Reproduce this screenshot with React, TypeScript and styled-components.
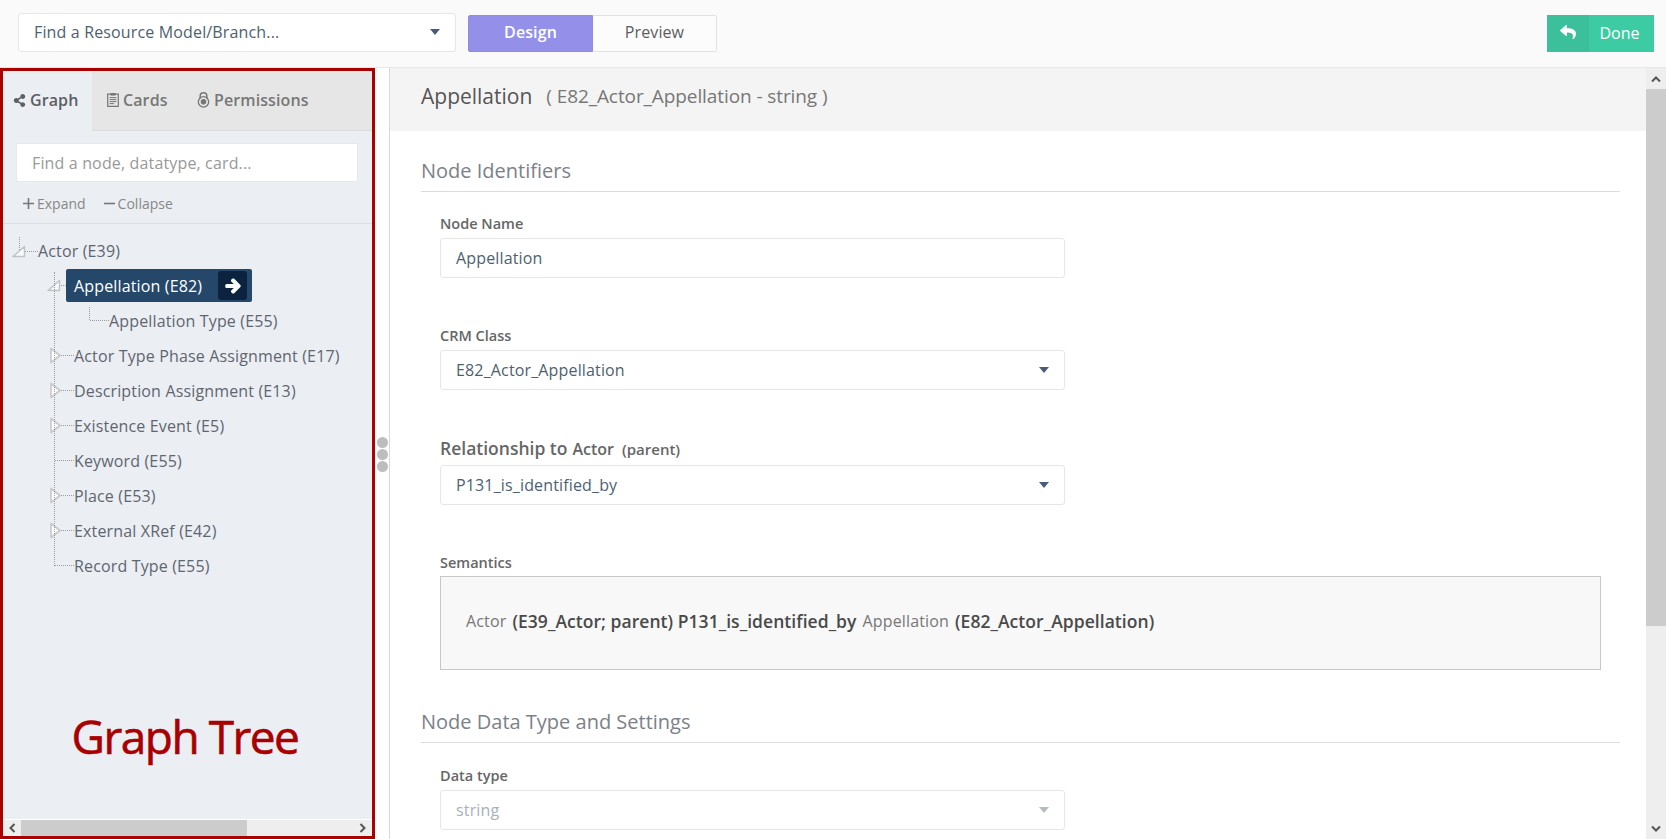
import React from "react";
import styled, { createGlobalStyle } from "styled-components";
import { FaShareAlt, FaReply, FaArrowRight } from "react-icons/fa";

const Global = createGlobalStyle`
  html, body { margin: 0; padding: 0; overflow: hidden; background: #fff; }
  * { box-sizing: border-box; }
  body { font-family: "Open Sans", "Liberation Sans", sans-serif; color: #666; }
`;

const Page = styled.div`
  width: 1666px;
  height: 839px;
  display: flex;
  flex-direction: column;
  overflow: hidden;
`;

const TopBar = styled.header`
  height: 68px;
  flex: none;
  display: flex;
  align-items: flex-start;
  padding: 13px 12px 0 18px;
  background: #fafafa;
  border-bottom: 1px solid #e8e8e8;
`;

const Select = styled.div<{ $width?: number; $disabled?: boolean }>`
  width: ${(p) => p.$width ?? 625}px;
  height: 40px;
  flex: none;
  display: flex;
  align-items: center;
  justify-content: space-between;
  padding: 0 15px 1px 15px;
  background: #fff;
  border: 1px solid #e6e6e6;
  border-radius: 3px;
  font-size: 16px;
  letter-spacing: 0.15px;
  color: ${(p) => (p.$disabled ? "#a9b1ba" : "#4d5f73")};
  svg { color: ${(p) => (p.$disabled ? "#b5bcc4" : "#4a5a78")}; }
`;

const TopSelect = styled(Select)`
  height: 39px;
  margin-right: 12px;
`;

const Segment = styled.button<{ $active?: boolean }>`
  width: ${(p) => (p.$active ? 125 : 124)}px;
  height: 37px;
  margin-top: 2px;
  padding: 0 0 3px;
  font-family: inherit;
  font-size: 16px;
  letter-spacing: 0.1px;
  font-weight: ${(p) => (p.$active ? 600 : 400)};
  color: ${(p) => (p.$active ? "#fff" : "#5c5c5c")};
  background: ${(p) => (p.$active ? "#9490ea" : "#fcfcfc")};
  border: 1px solid ${(p) => (p.$active ? "#8f8be6" : "#e2e2e2")};
  border-left-width: ${(p) => (p.$active ? 1 : 0)}px;
  border-radius: ${(p) => (p.$active ? "2px 0 0 2px" : "0 2px 2px 0")};
`;

const DoneButton = styled.div`
  margin-left: auto;
  margin-top: 2px;
  width: 107px;
  height: 37px;
  display: flex;
  background: #3dcba3;
  color: #fff;
  font-size: 16px;
`;

const DoneIcon = styled.span`
  width: 42px;
  display: flex;
  align-items: center;
  justify-content: center;
  padding-bottom: 4px;
  background: #3cc09c;
  font-size: 16px;
`;

const DoneLabel = styled.span`
  flex: 1;
  display: flex;
  align-items: center;
  justify-content: center;
  padding: 0 4px 2px 0;
`;

const Body = styled.div`
  flex: 1;
  min-height: 0;
  display: flex;
`;

const Side = styled.aside`
  width: 375px;
  flex: none;
  position: relative;
  display: flex;
  flex-direction: column;
  background: #ebeef3;
  border: 3px solid #a90000;
`;

const Tabs = styled.div`
  height: 60px;
  flex: none;
  display: flex;
  background: #e6e6e6;
  border-bottom: 1px solid #dcdcdc;
`;

const Tab = styled.div<{ $active?: boolean; $width: number; $pad: number }>`
  width: ${(p) => p.$width}px;
  display: flex;
  align-items: center;
  gap: 4px;
  padding: 0 0 2px ${(p) => p.$pad}px;
  font-size: 16px;
  font-weight: 600;
  letter-spacing: 0.1px;
  color: ${(p) => (p.$active ? "#5c5f63" : "#777")};
  background: ${(p) => (p.$active ? "#ebeef3" : "transparent")};
  border-right: ${(p) => (p.$active ? "1px solid #f0f0f0" : "none")};
  margin-bottom: ${(p) => (p.$active ? "-1px" : "0")};
  svg { flex: none; }
`;

const Search = styled.div`
  margin: 12px 14px 0 13px;
  height: 39px;
  padding: 0 0 0 15px;
  display: flex;
  align-items: center;
  background: #fff;
  border: 1px solid #e8e8e8;
  font-size: 16px;
  letter-spacing: 0.15px;
  color: #999;
`;

const TreeActions = styled.div`
  height: 42px;
  flex: none;
  display: flex;
  align-items: center;
  gap: 18px;
  padding: 2px 0 0 20px;
  border-bottom: 1px solid #dcdfe2;
  font-size: 14px;
  color: #888;
`;

const TreeAction = styled.span`
  display: flex;
  align-items: center;
  gap: 3px;
  svg { color: #777; }
`;

const Tree = styled.div`
  flex: 1;
  min-height: 0;
  position: relative;
  padding: 10px 0 0 11px;
  font-size: 16px;
  letter-spacing: 0.15px;
  color: #5f6670;
`;

const Row = styled.div<{ $indent: number }>`
  height: 35px;
  display: flex;
  align-items: center;
  padding-left: ${(p) => p.$indent}px;
  white-space: nowrap;
`;

const RootRow = styled(Row)`
  height: 34px;
`;

const Connector = styled.svg`
  flex: none;
  overflow: visible;
`;

const Selected = styled.div`
  width: 186px;
  height: 33px;
  flex: none;
  display: flex;
  align-items: center;
  justify-content: space-between;
  padding: 0 5px 0 8px;
  background: #25476a;
  border-radius: 2px;
  color: #fff;
`;

const GoBox = styled.span`
  width: 29px;
  height: 29px;
  display: flex;
  align-items: center;
  justify-content: center;
  background: #0c2340;
  border-radius: 3px;
  color: #fff;
  font-size: 16px;
  svg { stroke: currentColor; stroke-width: 50px; }
`;

const Annotation = styled.div`
  position: absolute;
  left: 0;
  right: 5px;
  top: 635px;
  text-align: center;
  font-size: 46px;
  line-height: 60px;
  font-weight: 500;
  letter-spacing: -1.5px;
  -webkit-text-stroke: 0.6px #a90000;
  color: #a90000;
`;

const HScroll = styled.div`
  height: 17px;
  flex: none;
  display: flex;
  align-items: center;
  background: #eee;
  border-top: 1px solid #fff;
`;

const ScrollArrow = styled.span`
  width: 18px;
  height: 17px;
  flex: none;
  display: flex;
  align-items: center;
  justify-content: center;
`;

const HThumb = styled.span`
  width: 226px;
  height: 100%;
  background: #ccc;
`;

const Spacer = styled.span`
  flex: 1;
`;

const Gutter = styled.div`
  width: 15px;
  flex: none;
  display: flex;
  flex-direction: column;
  align-items: center;
  justify-content: flex-start;
  padding-top: 369px;
  background: #fff;
  border-right: 1px solid #d8d8d8;
`;

const Dot = styled.span`
  width: 11px;
  height: 11px;
  flex: none;
  margin-bottom: 1px;
  border-radius: 50%;
  background: #bdbdbd;
`;

const Main = styled.main`
  flex: 1;
  min-width: 0;
  display: flex;
  flex-direction: column;
  overflow: hidden;
`;

const MainHeader = styled.div`
  height: 63px;
  flex: none;
  display: flex;
  align-items: center;
  padding: 0 0 7px 31px;
  background: #f4f4f4;
`;

const Title = styled.h1`
  margin: 0;
  font-size: 21px;
  font-weight: 400;
  color: #555;
`;

const Subtitle = styled.span`
  margin-left: 14px;
  font-size: 19px;
  letter-spacing: -0.09px;
  color: #777;
`;

const Content = styled.div`
  flex: 1;
  min-height: 0;
  overflow: hidden;
  padding: 25px 26px 0 31px;
`;

const SectionTitle = styled.h2<{ $top?: number }>`
  margin: ${(p) => p.$top ?? 0}px 0 0;
  height: 36px;
  padding-bottom: 7px;
  display: flex;
  align-items: flex-end;
  font-size: 20px;
  font-weight: 400;
  line-height: 26px;
  color: #7c8189;
  border-bottom: 1px solid #ddd;
`;

const Field = styled.div<{ $top: number }>`
  margin: ${(p) => p.$top}px 0 0 19px;
  display: flex;
  flex-direction: column;
`;

const FieldLabel = styled.label<{ $gap?: number }>`
  font-size: 14.5px;
  line-height: 20px;
  font-weight: 600;
  color: #666;
  margin-bottom: ${(p) => p.$gap ?? 4}px;
`;

const BigLabel = styled.label`
  display: flex;
  align-items: baseline;
  gap: 5px;
  height: 22px;
  font-size: 17.5px;
  line-height: 22px;
  font-weight: 600;
  color: #666;
  margin-bottom: 6px;
`;

const LabelNode = styled.span`
  font-size: 16px;
`;

const LabelNote = styled.span`
  font-size: 15px;
  margin-left: 3px;
`;

const Semantics = styled.div`
  width: 1161px;
  height: 94px;
  display: flex;
  align-items: center;
  gap: 6px;
  padding: 0 24px 5px 25px;
  background: #f8f8f8;
  border: 1px solid #c8c8c8;
  font-size: 16px;
  letter-spacing: 0.15px;
  color: #777;
`;

const Strong = styled.b`
  font-size: 17.5px;
  letter-spacing: 0.05px;
  font-weight: 600;
  color: #4a4a4a;
`;

const VScroll = styled.div`
  width: 20px;
  flex: none;
  display: flex;
  flex-direction: column;
  background: #eee;
`;

const VArrow = styled.span`
  height: 21px;
  flex: none;
  display: flex;
  align-items: center;
  justify-content: center;
`;

const VThumb = styled.span`
  height: 537px;
  flex: none;
  background: #ccc;
`;

const LINE = "#9a9ea3";

const Chevron = ({ dir }: { dir: "up" | "down" | "left" | "right" }) => {
  const rot = { up: 0, right: 90, down: 180, left: 270 }[dir];
  return (
    <svg width="10" height="8" viewBox="0 0 10 8" style={{ transform: `rotate(${rot}deg)` }}>
      <path d="M1 6.5 L5 2.5 L9 6.5" fill="none" stroke="#555" strokeWidth="2" />
    </svg>
  );
};

const Caret = () => (
  <svg width="10" height="6" viewBox="0 0 10 6">
    <path d="M0 0h10L5 6z" fill="currentColor" />
  </svg>
);

const ClipboardIcon = () => (
  <svg width="12" height="15" viewBox="0 0 12 15">
    <path d="M.7 2.2h10.6v12.1H.7z" fill="none" stroke="#777" strokeWidth="1.2" />
    <path d="M3.5 1h5v2.6h-5z" fill="#777" />
    <path d="M2.6 5.6h6.8M2.6 7.6h6.8M2.6 9.6h6.8M2.6 11.6h4.6" stroke="#777" strokeWidth="1" />
  </svg>
);

const LockIcon = () => (
  <svg width="13" height="16" viewBox="0 0 14 17">
    <path d="M3.4 7V4.4a3.6 3.6 0 0 1 7.2 0V7" fill="none" stroke="#777" strokeWidth="1.6" />
    <circle cx="7" cy="10.5" r="5.6" fill="none" stroke="#777" strokeWidth="1.4" />
    <circle cx="7" cy="10.5" r="3" fill="#777" />
  </svg>
);

const PlusIcon = () => (
  <svg width="11" height="11" viewBox="0 0 11 11">
    <path d="M5.5 0v11M0 5.5h11" stroke="#777" strokeWidth="1.6" />
  </svg>
);

const MinusIcon = () => (
  <svg width="11" height="11" viewBox="0 0 11 11">
    <path d="M0 5.5h11" stroke="#777" strokeWidth="1.6" />
  </svg>
);

/* dotted tree connector with optional expand/collapse triangle */
const Branch = ({ kind, width, up = 0 }: { kind: "open" | "closed" | "leaf"; width: number; up?: number }) => (
  <Connector width={width} height="35" viewBox={`0 0 ${width} 35`}>
    <path
      d={`M5.5 ${17.5 - up}V17.5H${width}`}
      fill="none"
      stroke={LINE}
      strokeDasharray="1 1"
      shapeRendering="crispEdges"
    />
    {kind === "open" && (
      <path d="M-1 22.5 L10.5 22.5 L10.5 12.5 Z" fill="#f8f9fa" stroke="#c0c2c5" strokeWidth="1.4" strokeLinejoin="round" />
    )}
    {kind === "closed" && (
      <path d="M2 10.5 L11 17.5 L2 24.5 Z" fill="#fdfdfe" stroke="#c6c8cb" strokeWidth="1.6" strokeLinejoin="round" />
    )}
  </Connector>
);

/* continuous vertical dotted line that joins the children of the root */
const TreeTrunk = styled.div`
  position: absolute;
  left: 51px;
  top: 48px;
  height: 294px;
  border-left: 1px dotted ${LINE};
`;

const items: { label: string; kind: "closed" | "leaf" }[] = [
  { label: "Actor Type Phase Assignment (E17)", kind: "closed" },
  { label: "Description Assignment (E13)", kind: "closed" },
  { label: "Existence Event (E5)", kind: "closed" },
  { label: "Keyword (E55)", kind: "leaf" },
  { label: "Place (E53)", kind: "closed" },
  { label: "External XRef (E42)", kind: "closed" },
  { label: "Record Type (E55)", kind: "leaf" },
];

export default function App() {
  return (
    <>
      <Global />
      <Page>
        <TopBar>
          <TopSelect $width={438}>
            Find a Resource Model/Branch...
            <Caret />
          </TopSelect>
          <Segment $active>Design</Segment>
          <Segment>Preview</Segment>
          <DoneButton>
            <DoneIcon>
              <FaReply />
            </DoneIcon>
            <DoneLabel>Done</DoneLabel>
          </DoneButton>
        </TopBar>
        <Body>
          <Side>
            <Tabs>
              <Tab $active $width={89} $pad={10}>
                <FaShareAlt size={13} />
                Graph
              </Tab>
              <Tab $width={90} $pad={15}>
                <ClipboardIcon />
                Cards
              </Tab>
              <Tab $width={130} $pad={15}>
                <LockIcon />
                Permissions
              </Tab>
            </Tabs>
            <Search>Find a node, datatype, card...</Search>
            <TreeActions>
              <TreeAction>
                <PlusIcon />
                Expand
              </TreeAction>
              <TreeAction>
                <MinusIcon />
                Collapse
              </TreeAction>
            </TreeActions>
            <Tree>
              <TreeTrunk />
              <RootRow $indent={0}>
                <Branch kind="open" width={24} up={15} />
                Actor (E39)
              </RootRow>
              <Row $indent={35}>
                <Branch kind="open" width={17} />
                <Selected>
                  Appellation (E82)
                  <GoBox>
                    <FaArrowRight />
                  </GoBox>
                </Selected>
              </Row>
              <Row $indent={70}>
                <Branch kind="leaf" width={25} up={14} />
                Appellation Type (E55)
              </Row>
              {items.map((it) => (
                <Row key={it.label} $indent={35}>
                  <Branch kind={it.kind} width={25} />
                  {it.label}
                </Row>
              ))}
            </Tree>
            <HScroll>
              <ScrollArrow>
                <Chevron dir="left" />
              </ScrollArrow>
              <HThumb />
              <Spacer />
              <ScrollArrow>
                <Chevron dir="right" />
              </ScrollArrow>
            </HScroll>
            <Annotation>Graph Tree</Annotation>
          </Side>
          <Gutter>
            <Dot />
            <Dot />
            <Dot />
          </Gutter>
          <Main>
            <MainHeader>
              <Title>Appellation</Title>
              <Subtitle>( E82_Actor_Appellation - string )</Subtitle>
            </MainHeader>
            <Content>
              <SectionTitle>Node Identifiers</SectionTitle>
              <Field $top={22}>
                <FieldLabel>Node Name</FieldLabel>
                <Select>Appellation</Select>
              </Field>
              <Field $top={48}>
                <FieldLabel>CRM Class</FieldLabel>
                <Select>
                  E82_Actor_Appellation
                  <Caret />
                </Select>
              </Field>
              <Field $top={47}>
                <BigLabel>
                  Relationship to <LabelNode>Actor</LabelNode> <LabelNote>(parent)</LabelNote>
                </BigLabel>
                <Select>
                  P131_is_identified_by
                  <Caret />
                </Select>
              </Field>
              <Field $top={48}>
                <FieldLabel $gap={3}>Semantics</FieldLabel>
                <Semantics>
                  Actor <Strong>(E39_Actor; parent) P131_is_identified_by</Strong> Appellation{" "}
                  <Strong>(E82_Actor_Appellation)</Strong>
                </Semantics>
              </Field>
              <SectionTitle $top={37}>Node Data Type and Settings</SectionTitle>
              <Field $top={23}>
                <FieldLabel>Data type</FieldLabel>
                <Select $disabled>
                  string
                  <Caret />
                </Select>
              </Field>
            </Content>
          </Main>
          <VScroll>
            <VArrow>
              <Chevron dir="up" />
            </VArrow>
            <VThumb />
            <Spacer />
            <VArrow>
              <Chevron dir="down" />
            </VArrow>
          </VScroll>
        </Body>
      </Page>
    </>
  );
}
